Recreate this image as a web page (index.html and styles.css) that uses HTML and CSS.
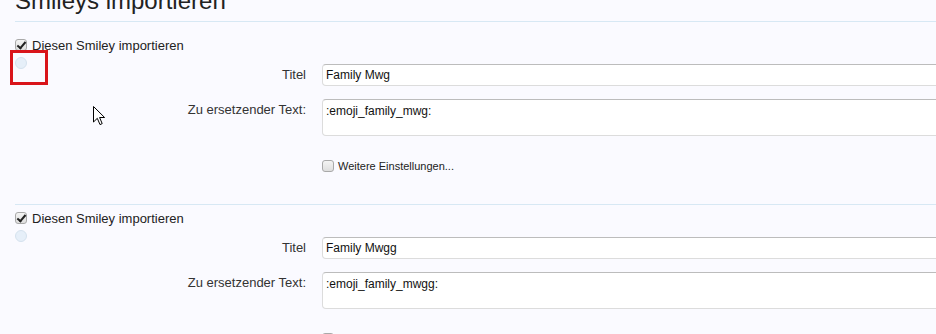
FILE: index.html
```html
<!DOCTYPE html>
<html lang="de">
<head>
    <meta charset="UTF-8">
    <title>Smileys importieren</title>
    <link rel="stylesheet" href="styles.css">
</head>
<body>
    <div class="page">
        <h1 class="page-title">Smileys importieren</h1>

        <div class="smiley">
            <label class="smiley-head">
                <input type="checkbox" class="check" checked>
                <span>Diesen Smiley importieren</span>
            </label>
            <div class="smiley-body">
                <div class="thumb"></div>
                <div class="fields">
                    <div class="row">
                        <div class="row-label">Titel</div>
                        <input class="text-input" type="text" value="Family Mwg">
                    </div>
                    <div class="row">
                        <div class="row-label">Zu ersetzender Text:</div>
                        <textarea class="text-area">:emoji_family_mwg:</textarea>
                    </div>
                    <div class="row row-small">
                        <div></div>
                        <label class="more">
                            <input type="checkbox" class="check">
                            <span>Weitere Einstellungen...</span>
                        </label>
                    </div>
                </div>
            </div>
        </div>

        <div class="smiley">
            <label class="smiley-head">
                <input type="checkbox" class="check" checked>
                <span>Diesen Smiley importieren</span>
            </label>
            <div class="smiley-body">
                <div class="thumb"></div>
                <div class="fields">
                    <div class="row">
                        <div class="row-label">Titel</div>
                        <input class="text-input" type="text" value="Family Mwgg">
                    </div>
                    <div class="row">
                        <div class="row-label">Zu ersetzender Text:</div>
                        <textarea class="text-area">:emoji_family_mwgg:</textarea>
                    </div>
                    <div class="row row-small">
                        <div></div>
                        <label class="more">
                            <input type="checkbox" class="check">
                            <span>Weitere Einstellungen...</span>
                        </label>
                    </div>
                </div>
            </div>
        </div>
    </div>

    <!-- screenshot overlays -->
    <div class="highlight"></div>
    <svg class="cursor" width="13" height="20" viewBox="0 0 13 20">
        <path d="M0.5 0.5 L0.5 16 L4.3 12.3 L7 18.6 L9.2 17.6 L6.6 11.5 L11.6 11.5 Z" fill="#fff" stroke="#000" stroke-width="1"/>
    </svg>
</body>
</html>
```

FILE: styles.css
```css
* {
    margin: 0;
    padding: 0;
    box-sizing: border-box;
}

body {
    background-color: #fafaff;
    font-family: "Liberation Sans", Arial, sans-serif;
    color: #222;
    overflow: hidden;
}

.page {
    width: 1100px;
    padding-left: 15px;
}

.page-title {
    font-size: 24px;
    font-weight: normal;
    line-height: 30px;
    color: #222;
    margin-top: -14px;
    padding-bottom: 5px;
    border-bottom: 1px solid #d7e8f4;
}

.smiley {
    padding: 5px 0 28px;
    border-bottom: 1px solid #d7e8f4;
}

.smiley:first-of-type {
    margin-top: 10px;
}

.smiley-head {
    display: flex;
    align-items: center;
    height: 16px;
    font-size: 13px;
    color: #222;
}

.smiley-head .check {
    margin-right: 5px;
}

.check {
    appearance: none;
    -webkit-appearance: none;
    position: relative;
    width: 12px;
    height: 12px;
    border: 1px solid #a9a9a9;
    border-radius: 3px;
    background: linear-gradient(#f4f4f4, #dedede);
    flex: none;
}

.check:checked::after {
    content: "";
    position: absolute;
    left: 3px;
    top: 0px;
    width: 3px;
    height: 7px;
    border: solid #222;
    border-width: 0 2px 2px 0;
    transform: rotate(40deg);
}

.smiley-body {
    display: flex;
}

.thumb {
    flex: none;
    width: 12px;
    height: 12px;
    margin-top: 4px;
    border-radius: 50%;
    background-color: #e6eff9;
    border: 1px solid #d5e2ee;
}

.fields {
    flex: 1;
    padding-top: 11px;
}

.row {
    display: grid;
    grid-template-columns: 279px 1fr;
    column-gap: 16px;
    align-items: start;
    margin-bottom: 13px;
}

.row-label {
    text-align: right;
    font-size: 13px;
    line-height: 22px;
    color: #333;
}

.text-input,
.text-area {
    display: block;
    width: 100%;
    background-color: #fff;
    border: 1px solid #dcdcdc;
    border-top-color: #bcbcbc;
    border-radius: 4px;
    font-family: "Liberation Sans", Arial, sans-serif;
    font-size: 12px;
    color: #111;
    padding: 0 3px;
    outline: none;
}

.text-input {
    height: 22px;
}

.text-area {
    height: 37px;
    padding-top: 4px;
    resize: none;
    overflow: hidden;
}

.row-small {
    margin-top: 20px;
    margin-bottom: 0;
}

.more {
    display: flex;
    align-items: center;
    height: 20px;
    font-size: 11px;
    color: #222;
}

.more .check {
    margin-right: 4px;
}

.highlight {
    position: absolute;
    left: 10px;
    top: 50px;
    width: 38px;
    height: 35px;
    border: 3px solid #d9141a;
}

.cursor {
    position: absolute;
    left: 93px;
    top: 106px;
}
```
